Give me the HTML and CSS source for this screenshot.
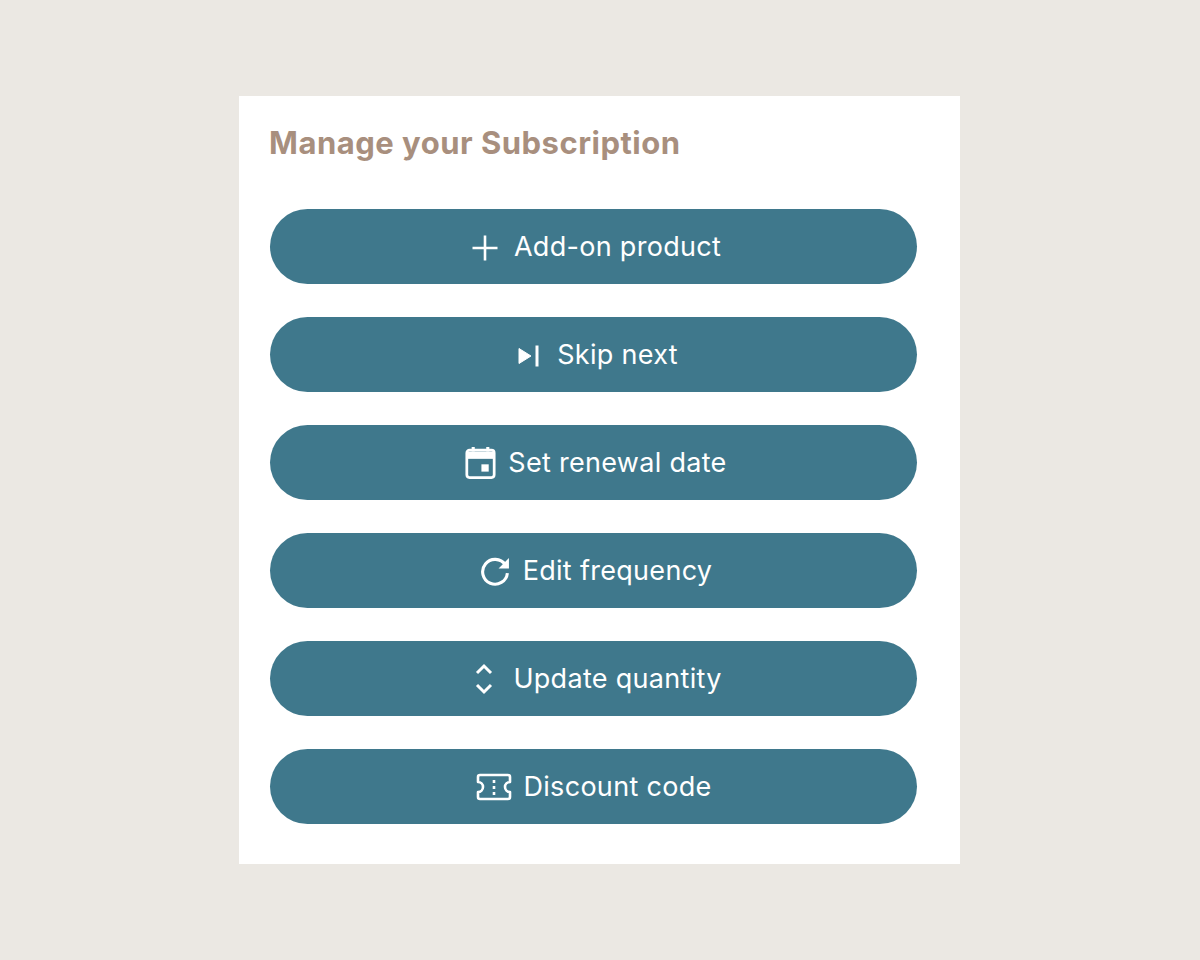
FILE: index.html
```html
<!DOCTYPE html>
<html lang="en">

<head>
    <meta charset="UTF-8">
    <meta name="viewport" content="width=device-width, initial-scale=1.0">
    <title>Manage your Subscription</title>

    <link rel="stylesheet" href="styles.css">
</head>

<body>
    <section class="card">
        <h1>Manage your Subscription</h1>

        <div class="actions">
            <button type="button" class="action">
                <svg class="icon icon-add" width="28" height="28" viewBox="0 0 28 28">
                    <path d="M14 1.500v25M1.500 14h25" fill="none" stroke="currentColor" stroke-width="2.600" />
                </svg>
                <span class="label">Add-on product</span>
            </button>
            <button type="button" class="action">
                <svg class="icon icon-skip" width="22" height="22" viewBox="0 0 22 22">
                    <path d="M1 3.500l12 7.500-12 7.500z" fill="currentColor" stroke="currentColor" stroke-width="1" stroke-linejoin="round" />
                    <path d="M19 0.500v21" fill="none" stroke="currentColor" stroke-width="3" />
                </svg>
                <span class="label">Skip next</span>
            </button>
            <button type="button" class="action">
                <svg class="icon icon-date" width="31" height="33" viewBox="0 0 34 36">
                    <path d="M9 1v5M25 1v5" fill="none" stroke="currentColor" stroke-width="3.400" />
                    <path d="M5 4.500h24a3 3 0 0 1 3 3v24a3 3 0 0 1-3 3h-24a3 3 0 0 1-3-3v-24a3 3 0 0 1 3-3z" fill="none" stroke="currentColor" stroke-width="3" />
                    <path d="M2 6h30v8h-30z" fill="currentColor" />
                    <path d="M18 20h8v8h-8z" fill="currentColor" />
                </svg>
                <span class="label">Set renewal date</span>
            </button>
            <button type="button" class="action">
                <svg class="icon icon-freq" width="31" height="31" viewBox="0 0 30 30">
                    <path d="M24.500 9.500a12 12 0 1 0 2 8" fill="none" stroke="currentColor" stroke-width="3" />
                    <path d="M28 3v10h-10z" fill="currentColor" />
                </svg>
                <span class="label">Edit frequency</span>
            </button>
            <button type="button" class="action">
                <svg class="icon icon-qty" width="20" height="34" viewBox="0 0 20 34">
                    <path d="M3 11l7-7 7 7M3 23l7 7 7-7" fill="none" stroke="currentColor" stroke-width="3" />
                </svg>
                <span class="label">Update quantity</span>
            </button>
            <button type="button" class="action">
                <svg class="icon icon-code" width="36" height="28" viewBox="0 0 36 28">
                    <path d="M4 2h28a2 2 0 0 1 2 2v5a5 5 0 0 0 0 10v5a2 2 0 0 1-2 2h-28a2 2 0 0 1-2-2v-5a5 5 0 0 0 0-10v-5a2 2 0 0 1 2-2z" fill="none" stroke="currentColor" stroke-width="2.600" stroke-linejoin="round" />
                    <path d="M18 7v3M18 13v3M18 19v3" fill="none" stroke="currentColor" stroke-width="2.600" />
                </svg>
                <span class="label">Discount code</span>
            </button>
        </div>
    </section>
</body>

</html>
```

FILE: styles.css
```css
body {
    margin: 0;
    min-height: 960px;
    background-color: #ebe8e3;
    font-family: 'Inter', 'Liberation Sans', sans-serif;
    display: flex;
    justify-content: center;
    align-items: flex-start;
}

.card {
    box-sizing: border-box;
    width: 721px;
    height: 768px;
    margin: 96px 0 0 -1px;
    padding: 28px 43px 0 31px;
    background-color: #ffffff;
}

h1 {
    margin: 0 0 47px -1px;
    font-size: 31px;
    line-height: 38px;
    font-weight: 700;
    letter-spacing: 0.5px;
    color: #a88f7e;
}

.actions {
    display: flex;
    flex-direction: column;
    gap: 33px;
}

/* the label is centred a little right of the button's middle, the icon hangs off its left */
.action {
    display: grid;
    grid-template-columns: 1fr auto 1fr;
    align-items: center;
    height: 75px;
    padding: 0 0 0 48px;
    border: none;
    border-radius: 38px;
    background-color: #3f788c;
    color: #ffffff;
    font-family: inherit;
    font-size: 27px;
    letter-spacing: 0.3px;
    cursor: pointer;
}

.icon {
    justify-self: end;
    margin-right: 12px;
}

.icon-add {
    margin-top: 2px;
    margin-right: 15px;
}

.icon-skip {
    margin-top: 2px;
    margin-right: 17px;
}

.icon-qty {
    margin-right: 19px;
}

.icon-code {
    margin-right: 11px;
}

.label {
    grid-column: 2;
    grid-row: 1;
}
```
